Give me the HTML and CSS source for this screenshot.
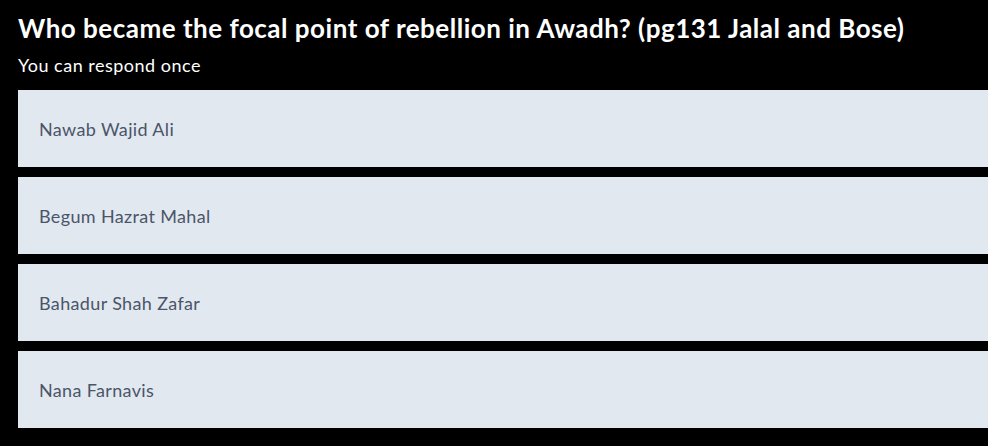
FILE: index.html
```html
<!DOCTYPE html>
<html lang="en">
<head>
    <meta charset="UTF-8">
    <meta name="viewport" content="width=device-width, initial-scale=1.0">
    <title>Poll</title>
    <link rel="stylesheet" href="styles.css">
</head>
<body>
    <div class="poll">
        <h1 class="question">Who became the focal point of rebellion in Awadh? (pg131 Jalal and Bose)</h1>
        <p class="hint">You can respond once</p>
        <div class="options">
            <button class="option">Nawab Wajid Ali</button>
            <button class="option">Begum Hazrat Mahal</button>
            <button class="option">Bahadur Shah Zafar</button>
            <button class="option">Nana Farnavis</button>
        </div>
    </div>
</body>
</html>
```

FILE: styles.css
```css
html, body {
    margin: 0;
    background-color: #000;
    overflow: hidden;
}
body {
    font-family: 'Lato', 'Noto Sans', sans-serif;
    color: #fff;
}
.poll {
    padding: 12px 0 0 18px;
    width: 1000px;
}
.question {
    font-size: 26px;
    font-weight: 700;
    line-height: 32px;
    letter-spacing: 0.5px;
    margin: 0;
}
.hint {
    font-size: 18px;
    line-height: 24px;
    letter-spacing: 0.5px;
    margin: 9px 0 13px;
}
.options {
    display: flex;
    flex-direction: column;
    gap: 10px;
}
.option {
    display: block;
    width: 100%;
    height: 77px;
    border: none;
    background-color: #e2e8f0;
    color: #4a5568;
    font-family: inherit;
    font-size: 18px;
    letter-spacing: 0.35px;
    text-align: left;
    padding: 0 21px;
    cursor: pointer;
}
```
